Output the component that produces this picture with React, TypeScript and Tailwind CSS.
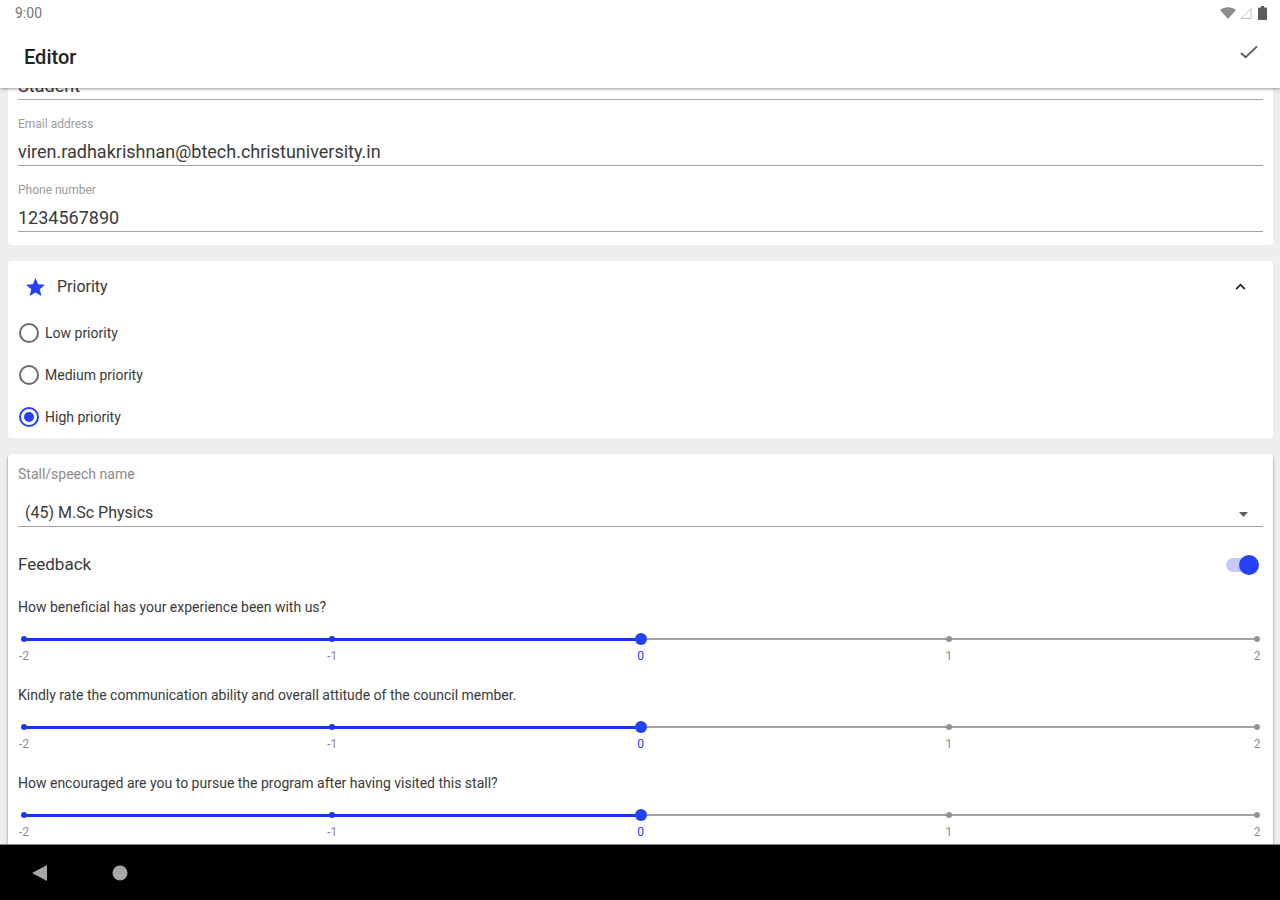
import { useState } from "react";

const contactFields = [
  {
    id: "email",
    label: "Email address",
    type: "email",
    value: "viren.radhakrishnan@btech.christuniversity.in",
  },
  { id: "phone", label: "Phone number", type: "tel", value: "1234567890" },
];

const priorities = ["Low priority", "Medium priority", "High priority"];

const questions = [
  "How beneficial has your experience been with us?",
  "Kindly rate the communication ability and overall attitude of the council member.",
  "How encouraged are you to pursue the program after having visited this stall?",
];

const marks = [-2, -1, 0, 1, 2];

const inputClass =
  "block h-7 w-full border-b border-[#a3a3a3] text-lg text-[#3a3a3a] outline-none";

function StatusBar() {
  return (
    <div className="flex h-[26px] items-center justify-between pl-[15px] pr-[13px] text-sm text-[#777]">
      <span>9:00</span>
      <div className="flex items-center">
        <svg className="mr-1 h-3 w-4" viewBox="0 0 16 12" fill="#8c8c8c">
          <path d="M0 3C4.5-.8 11.500-.8 16 3L8 12z" />
        </svg>
        <svg className="mr-1.5 h-3 w-3" viewBox="0 0 12 12" fill="none" stroke="#bdbdbd">
          <path d="M1 11.500L11 1.500V11.500z" />
        </svg>
        <svg className="h-[14px] w-[9px]" viewBox="0 0 9 14" fill="#5c5c5c">
          <path d="M3 0h3v1.500h2c.5 0 1 .5 1 1V13c0 .5-.5 1-1 1H1c-.5 0-1-.5-1-1V2.500c0-.5.5-1 1-1h2z" />
        </svg>
      </div>
    </div>
  );
}

function RatingSlider({ id, question }: { id: string; question: string }) {
  const [value, setValue] = useState(0);
  const percent = ((value + 2) / 4) * 100;

  return (
    <div className="pb-1.5 pt-3.5">
      <label htmlFor={id} className="block text-sm leading-5 text-[#3a3a3a]">
        {question}
      </label>
      <div className="relative mt-3.5 h-4">
        {/* Track and tick marks under the native range */}
        <div className="absolute inset-x-1.5 top-[7px] h-0.5 bg-[#a0a0a0]" />
        <div className="absolute inset-x-1.5 top-[7px]">
          <div className="h-[3px] bg-[#1a35f0]" style={{ width: `${percent}%` }} />
        </div>
        <div className="absolute inset-x-[3px] top-[5px] flex justify-between">
          {marks.map((mark) => (
            <span
              key={mark}
              className={`h-1.5 w-1.5 rounded-full ${mark <= value ? "bg-[#1a35f0]" : "bg-[#939393]"}`}
            />
          ))}
        </div>
        <input
          id={id}
          type="range"
          min={-2}
          max={2}
          step={1}
          value={value}
          onChange={(e) => setValue(Number(e.target.value))}
          className="relative block h-4 w-full cursor-pointer appearance-none bg-transparent [&::-webkit-slider-thumb]:h-3 [&::-webkit-slider-thumb]:w-3 [&::-webkit-slider-thumb]:appearance-none [&::-webkit-slider-thumb]:rounded-full [&::-webkit-slider-thumb]:bg-[#2541fa]"
        />
      </div>
      <div className="flex h-[18px] items-center justify-between text-xs">
        {marks.map((mark) => (
          <span
            key={mark}
            className={`w-3 text-center ${mark === value ? "text-[#2541fa]" : "text-[#8e8e8e]"}`}
          >
            {mark}
          </span>
        ))}
      </div>
    </div>
  );
}

export default function App() {
  const [priority, setPriority] = useState("High priority");
  const [open, setOpen] = useState(true);
  const [feedback, setFeedback] = useState(true);

  return (
    <div className="flex h-screen flex-col overflow-hidden bg-[#eee] font-[Roboto,sans-serif]">
      <header className="relative z-10 bg-white shadow-[0_1px_3px_rgba(0,0,0,0.4)]">
        <StatusBar />
        <div className="flex h-[62px] items-center justify-between pl-6 pr-[22px]">
          <h1 className="text-xl font-medium text-[#222]">Editor</h1>
          <button aria-label="Save" className="mb-2.5">
            <svg className="h-[14px] w-[18px]" viewBox="0 0 19 14" fill="none" stroke="#5f5f5f" strokeWidth="2">
              <path d="M1 8l5 4.500L18 1" />
            </svg>
          </button>
        </div>
      </header>

      <main className="flex min-h-0 flex-1 flex-col gap-4 overflow-hidden pl-2 pr-[7px]">
        {/* Contact details, scrolled partly under the app bar */}
        <section className="-mt-4 shrink-0 rounded-sm bg-white px-2.5 pb-[13px]">
          <input aria-label="Role" type="text" defaultValue="Student" className={inputClass} />
          {contactFields.map((field) => (
            <div key={field.id} className="pt-4">
              <label htmlFor={field.id} className="mb-1.5 block text-xs leading-4 text-[#9c9c9c]">
                {field.label}
              </label>
              <input
                id={field.id}
                type={field.type}
                defaultValue={field.value}
                className={inputClass}
              />
            </div>
          ))}
        </section>

        {/* Priority */}
        <section className="shrink-0 rounded-sm bg-white px-2.5">
          <button
            aria-expanded={open}
            onClick={() => setOpen(!open)}
            className="flex h-[51px] w-full items-center pl-2 pr-[17px] text-left"
          >
            <svg className="h-[18px] w-[19px]" viewBox="2 2 20 19" fill="#2541fa">
              <path d="M12 17.270L18.180 21l-1.640-7.030L22 9.240l-7.190-.61L12 2 9.190 8.630 2 9.240l5.460 4.730L5.820 21z" />
            </svg>
            <span className="ml-3 flex-1 text-base text-[#3a3a3a]">Priority</span>
            <svg
              className={`h-[7px] w-[11px] ${open ? "" : "rotate-180"}`}
              viewBox="0 0 12 8"
              fill="none"
              stroke="#222"
              strokeWidth="2"
            >
              <path d="M1 7l5-5 5 5" />
            </svg>
          </button>
          {open &&
            priorities.map((name) => (
              <label key={name} className="flex h-[42px] items-center gap-1.5 pl-px text-sm text-[#3a3a3a]">
                <input
                  type="radio"
                  name="priority"
                  checked={priority === name}
                  onChange={() => setPriority(name)}
                  className="grid h-5 w-5 appearance-none place-items-center rounded-full border-2 border-[#6b6b6b] checked:border-[#2541fa] checked:before:h-2.5 checked:before:w-2.5 checked:before:rounded-full checked:before:bg-[#2541fa]"
                />
                {name}
              </label>
            ))}
        </section>

        {/* Stall feedback */}
        <section className="shrink-0 rounded-sm bg-white px-2.5 shadow-[0_2px_3px_rgba(0,0,0,0.45)]">
          <label htmlFor="stall" className="block pt-2.5 text-sm leading-5 text-[#8a8a8a]">
            Stall/speech name
          </label>
          <div className="relative mt-4">
            <select
              id="stall"
              className="block h-[27px] w-full appearance-none border-b border-[#a3a3a3] pl-[7px] text-base text-[#3a3a3a] outline-none"
            >
              <option>(45) M.Sc Physics</option>
            </select>
            <svg className="pointer-events-none absolute right-[15px] top-3 h-[5px] w-[9px]" viewBox="0 0 9 5" fill="#5f5f5f">
              <path d="M0 0h9L4.500 5z" />
            </svg>
          </div>

          <div className="mt-5 flex h-9 items-center justify-between pr-1">
            <label htmlFor="feedback" className="text-[17px] text-[#3a3a3a]">
              Feedback
            </label>
            <input
              id="feedback"
              type="checkbox"
              role="switch"
              checked={feedback}
              onChange={(e) => setFeedback(e.target.checked)}
              className="flex h-5 w-[33px] cursor-pointer appearance-none items-center before:h-3.5 before:w-[30px] before:shrink-0 before:rounded-full before:bg-[#bdbdbd] after:-ml-[30px] after:h-5 after:w-5 after:shrink-0 after:rounded-full after:bg-[#f5f5f5] checked:before:bg-[#c3caff] checked:after:-ml-[17px] checked:after:bg-[#2541fa]"
            />
          </div>

          {questions.map((question, i) => (
            <RatingSlider key={question} id={`question-${i}`} question={question} />
          ))}
        </section>
      </main>

      <nav className="relative flex h-14 shrink-0 items-center gap-[65px] border-t border-[#888] bg-black pl-8">
        <button aria-label="Back">
          <svg className="h-4 w-[15px]" viewBox="0 0 15 16" fill="#a6a6a6">
            <path d="M15 0v16L0 8z" />
          </svg>
        </button>
        <button aria-label="Home">
          <svg className="h-4 w-4" viewBox="0 0 16 16" fill="#a6a6a6">
            <circle cx="8" cy="8" r="7.500" />
          </svg>
        </button>
      </nav>
    </div>
  );
}
